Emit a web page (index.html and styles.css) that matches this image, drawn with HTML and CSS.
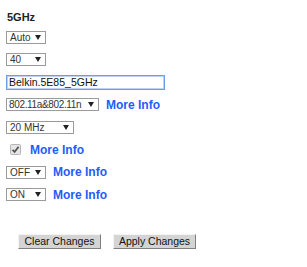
FILE: index.html
```html
<!DOCTYPE html>
<html lang="en">
<head>
  <meta charset="UTF-8" />
  <title>5GHz Wireless Settings</title>
  <link rel="stylesheet" href="styles.css">
</head>
<body>
  <div class="settings">
    <div class="heading">5GHz</div>

    <div class="row">
      <span class="drop w40"><select><option>Auto</option></select></span>
    </div>

    <div class="row">
      <span class="drop w40"><select><option>40</option></select></span>
    </div>

    <div class="row">
      <input type="text" class="ssid" value="Belkin.5E85_5GHz">
    </div>

    <div class="row">
      <span class="drop w93"><select class="tight"><option>802.11a&amp;802.11n</option></select></span>
      <a href="#" class="more">More Info</a>
    </div>

    <div class="row">
      <span class="drop w68"><select><option>20 MHz</option></select></span>
    </div>

    <div class="row">
      <span class="check">
        <svg width="11" height="11" viewBox="0 0 11 11">
          <rect x="0.5" y="0.5" width="10" height="10" rx="1" fill="#e6e6e6" stroke="#b5b5b5"/>
          <path d="M2.5 5.8 L4.6 7.8 L8.6 2.8" fill="none" stroke="#555" stroke-width="1.8"/>
        </svg>
      </span>
      <a href="#" class="more">More Info</a>
    </div>

    <div class="row">
      <span class="drop w40"><select><option>OFF</option></select></span>
      <a href="#" class="more">More Info</a>
    </div>

    <div class="row">
      <span class="drop w40"><select><option>ON</option></select></span>
      <a href="#" class="more">More Info</a>
    </div>

    <div class="actions">
      <button type="reset" class="btn">Clear Changes</button>
      <button type="submit" class="btn">Apply Changes</button>
    </div>
  </div>
</body>
</html>
```

FILE: styles.css
```css
body {
  margin: 0;
  background: #fff;
  font-family: "Liberation Sans", Arial, sans-serif;
  font-size: 11px;
  color: #222;
}

.settings {
  padding: 9px 0 0 6px;
}

.heading {
  height: 17px;
  line-height: 17px;
  font-weight: bold;
  font-size: 11px;
  padding-left: 1px;
  color: #222;
}

.row {
  display: flex;
  align-items: center;
  height: 22.5px;
  gap: 7px;
}

.drop {
  position: relative;
  display: inline-block;
  height: 13px;
}

.drop select {
  appearance: none;
  -webkit-appearance: none;
  width: 100%;
  height: 13px;
  margin: 0;
  padding: 0 0 0 3px;
  border: 1px solid #9a9a9a;
  border-radius: 0;
  background: #fff;
  font-family: "Liberation Sans", Arial, sans-serif;
  font-size: 10px;
  line-height: 11px;
  color: #333;
  box-sizing: border-box;
}

.drop select.tight {
  padding-left: 2px;
  letter-spacing: -0.35px;
}

.drop::after {
  content: "";
  position: absolute;
  right: 5px;
  top: 4px;
  border-left: 3px solid transparent;
  border-right: 3px solid transparent;
  border-top: 5px solid #222;
  pointer-events: none;
}

.w40 { width: 40px; }
.w68 { width: 68px; }
.w93 { width: 93px; }

.ssid {
  width: 159px;
  height: 15px;
  margin: 0;
  padding: 0 2px;
  border: 1px solid #6e9de8;
  box-shadow: 0 0 0 1px #bcd2f5 inset;
  border-radius: 0;
  font-family: "Liberation Sans", Arial, sans-serif;
  font-size: 10.5px;
  color: #111;
  box-sizing: border-box;
  outline: none;
}

.more {
  color: #1f5cff;
  font-weight: bold;
  font-size: 12px;
  text-decoration: none;
}

.check {
  display: inline-flex;
  margin-left: 4px;
  margin-right: 2px;
}

.actions {
  display: flex;
  gap: 12px;
  padding: 28px 0 0 12px;
}

.btn {
  width: 83px;
  height: 15px;
  padding: 0;
  background: #d4d4d4;
  border: 1px solid;
  border-color: #f4f4f4 #808080 #808080 #f4f4f4;
  border-radius: 0;
  font-family: "Liberation Sans", Arial, sans-serif;
  font-size: 10.5px;
  line-height: 13px;
  color: #111;
}
```
